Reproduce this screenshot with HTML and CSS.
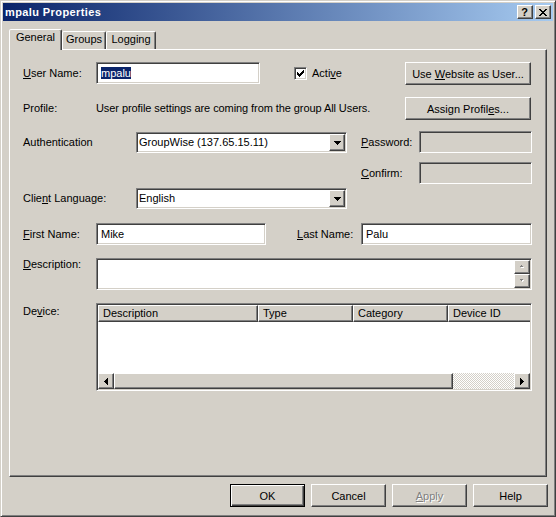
FILE: index.html
```html
<!DOCTYPE html>
<html>
<head>
<meta charset="utf-8">
<title>mpalu Properties</title>
<link rel="stylesheet" href="styles.css">
</head>
<body>
<div class="window">
  <div class="titlebar">
    <span class="title">mpalu Properties</span>
    <div class="tbtns">
      <div class="tbtn"><span class="qmark">?</span></div>
      <div class="tbtn">
        <svg class="xicon" width="8" height="7" viewBox="0 0 8 7" shape-rendering="crispEdges">
          <rect x="0" y="0" width="2" height="1"/><rect x="6" y="0" width="2" height="1"/>
          <rect x="1" y="1" width="2" height="1"/><rect x="5" y="1" width="2" height="1"/>
          <rect x="2" y="2" width="4" height="1"/>
          <rect x="3" y="3" width="2" height="1"/>
          <rect x="2" y="4" width="4" height="1"/>
          <rect x="1" y="5" width="2" height="1"/><rect x="5" y="5" width="2" height="1"/>
          <rect x="0" y="6" width="2" height="1"/><rect x="6" y="6" width="2" height="1"/>
        </svg>
      </div>
    </div>
  </div>

  <div class="tabs">
    <div class="tab sel tab-general">General</div>
    <div class="tab tab-groups">Groups</div>
    <div class="tab tab-logging">Logging</div>
  </div>

  <div class="panel">
    <div class="row r1">
      <div class="lbl lbl-short h22"><u>U</u>ser Name:</div>
      <div class="edit w-user"><span class="selected">mpalu</span></div>
      <div class="active">
        <span class="chk">
          <svg width="7" height="7" viewBox="0 0 7 7" shape-rendering="crispEdges">
            <rect x="0" y="2" width="1" height="3"/>
            <rect x="1" y="3" width="1" height="3"/>
            <rect x="2" y="4" width="1" height="3"/>
            <rect x="3" y="3" width="1" height="3"/>
            <rect x="4" y="2" width="1" height="3"/>
            <rect x="5" y="1" width="1" height="3"/>
            <rect x="6" y="0" width="1" height="3"/>
          </svg>
        </span>
        <span class="chk-label">Acti<u>v</u>e</span>
      </div>
      <div class="btn w-big"><span>Use <u>W</u>ebsite as User...</span></div>
    </div>

    <div class="row r2">
      <div class="lbl lbl-short h23">Profile:</div>
      <div class="lbl profile-text h23">User profile settings are coming from the group All Users.</div>
      <div class="btn w-big"><span>Assign Profil<u>e</u>s...</span></div>
    </div>

    <div class="row r3">
      <div class="lbl lbl-long h22">Authentication</div>
      <div class="combo w-combo combo-shift">
        <span class="ctext">GroupWise (137.65.15.11)</span>
        <span class="dd"><svg width="7" height="4" viewBox="0 0 7 4" shape-rendering="crispEdges"><rect x="0" y="0" width="7" height="1"/><rect x="1" y="1" width="5" height="1"/><rect x="2" y="2" width="3" height="1"/><rect x="3" y="3" width="1" height="1"/></svg></span>
      </div>
      <div class="lbl lbl-pw h22"><u>P</u>assword:</div>
      <div class="edit disabled w-pw"></div>
    </div>

    <div class="row r4">
      <div class="lbl lbl-pw lbl-confirm h22"><u>C</u>onfirm:</div>
      <div class="edit disabled w-pw"></div>
    </div>

    <div class="row r5">
      <div class="lbl lbl-long h21">Clie<u>n</u>t Language:</div>
      <div class="combo w-combo">
        <span class="ctext">English</span>
        <span class="dd"><svg width="7" height="4" viewBox="0 0 7 4" shape-rendering="crispEdges"><rect x="0" y="0" width="7" height="1"/><rect x="1" y="1" width="5" height="1"/><rect x="2" y="2" width="3" height="1"/><rect x="3" y="3" width="1" height="1"/></svg></span>
      </div>
    </div>

    <div class="row r6">
      <div class="lbl lbl-short h22"><u>F</u>irst Name:</div>
      <div class="edit w-first"><span class="etext">Mike</span></div>
      <div class="lbl lbl-last h22"><u>L</u>ast Name:</div>
      <div class="edit w-last"><span class="etext">Palu</span></div>
    </div>

    <div class="row r7">
      <div class="lbl lbl-short lbl-top"><u>D</u>escription:</div>
      <div class="memo">
        <div class="memo-body"></div>
        <div class="vscroll">
          <div class="sbtn vbtn"><svg width="6" height="4" viewBox="0 0 6 4" shape-rendering="crispEdges"><g fill="#fff"><rect x="3" y="1" width="1" height="1"/><rect x="2" y="2" width="3" height="1"/></g><g fill="#808080"><rect x="2" y="0" width="1" height="1"/><rect x="1" y="1" width="3" height="1"/></g></svg></div>
          <div class="sbtn vbtn"><svg width="6" height="4" viewBox="0 0 6 4" shape-rendering="crispEdges"><g fill="#fff"><rect x="2" y="1" width="3" height="1"/><rect x="3" y="2" width="1" height="1"/></g><g fill="#808080"><rect x="1" y="0" width="3" height="1"/><rect x="2" y="1" width="1" height="1"/></g></svg></div>
        </div>
      </div>
    </div>

    <div class="row r8">
      <div class="lbl lbl-short lbl-top lbl-device">De<u>v</u>ice:</div>
      <div class="list">
        <div class="lhead">
          <div class="hcol c1">Description</div>
          <div class="hcol c2">Type</div>
          <div class="hcol c3">Category</div>
          <div class="hcol c4">Device ID</div>
        </div>
        <div class="lbody"></div>
        <div class="hscroll">
          <div class="sbtn hbtn"><svg width="4" height="7" viewBox="0 0 4 7" shape-rendering="crispEdges"><rect x="3" y="0" width="1" height="7"/><rect x="2" y="1" width="1" height="5"/><rect x="1" y="2" width="1" height="3"/><rect x="0" y="3" width="1" height="1"/></svg></div>
          <div class="thumb"></div>
          <div class="track"></div>
          <div class="sbtn hbtn"><svg width="4" height="7" viewBox="0 0 4 7" shape-rendering="crispEdges"><rect x="0" y="0" width="1" height="7"/><rect x="1" y="1" width="1" height="5"/><rect x="2" y="2" width="1" height="3"/><rect x="3" y="3" width="1" height="1"/></svg></div>
        </div>
      </div>
    </div>
  </div>

  <div class="actions">
    <div class="btn dlg default"><span>OK</span></div>
    <div class="btn dlg"><span>Cancel</span></div>
    <div class="btn dlg off"><span><u>A</u>pply</span></div>
    <div class="btn dlg"><span>Help</span></div>
  </div>
</div>
</body>
</html>
```

FILE: styles.css
```css
* { box-sizing: border-box; }
html, body { margin: 0; padding: 0; }
body {
  width: 556px;
  height: 517px;
  overflow: hidden;
  background: #D4D0C8;
  font-family: "Liberation Sans", Arial, sans-serif;
  font-size: 11px;
  color: #000;
}
u { text-decoration: underline; text-underline-offset: 1px; }

.window {
  width: 556px;
  height: 517px;
  border: 1px solid;
  border-color: #D4D0C8 #404040 #404040 #D4D0C8;
  box-shadow: inset 1px 1px #fff, inset -1px -1px #808080;
  padding: 2px;
  background: #D4D0C8;
  display: flex;
  flex-direction: column;
}

/* title bar */
.titlebar {
  height: 18px;
  flex-shrink: 0;
  background: linear-gradient(to right, #0A246A, #A6CAF0);
  display: flex;
  align-items: center;
  justify-content: space-between;
  padding: 0 2px 0 2px;
}
.title {
  color: #fff;
  font-weight: bold;
  font-size: 11px;
  letter-spacing: 0.4px;
  line-height: 14px;
}
.tbtns { display: flex; gap: 2px; }
.tbtn {
  width: 16px;
  height: 14px;
  background: #D4D0C8;
  border: 1px solid;
  border-color: #fff #404040 #404040 #fff;
  box-shadow: inset -1px -1px #808080;
  display: flex;
  align-items: center;
  justify-content: center;
}
.qmark { font-weight: bold; font-size: 11px; line-height: 10px; margin-left: -1px; }
.xicon { fill: #000; display: block; margin-left: -1px; }

/* tabs */
.tabs {
  display: flex;
  align-items: flex-end;
  height: 20px;
  margin: 8px 0 0 6px;
  position: relative;
  z-index: 1;
  flex-shrink: 0;
}
.tab {
  height: 18px;
  border: 1px solid;
  border-bottom: none;
  border-color: #fff #404040 transparent #fff;
  border-radius: 2px 2px 0 0;
  box-shadow: inset -1px 0 #808080;
  text-align: center;
  line-height: 13px;
  padding-top: 1px;
  background: #D4D0C8;
}
.tab.sel { height: 21px; margin-bottom: -1px; }
.tab-general { width: 53px; }
.tab-groups { width: 44px; }
.tab-logging { width: 50px; }

/* panel */
.panel {
  width: 538px;
  height: 428px;
  margin-left: 6px;
  flex-shrink: 0;
  border: 1px solid;
  border-color: #fff #404040 #404040 #fff;
  box-shadow: inset -1px -1px #808080;
  padding: 12px 0 0 13px;
}
.row { display: flex; align-items: flex-start; }
.r2 { margin-top: 12px; }
.r3 { margin-top: 11px; }
.r4 { margin-top: 9px; }
.r5 { margin-top: 4px; }
.r6 { margin-top: 14px; }
.r7 { margin-top: 13px; }
.r8 { margin-top: 13px; }

.lbl { white-space: nowrap; flex-shrink: 0; }
.h21 { line-height: 21px; }
.h22 { line-height: 22px; }
.h23 { line-height: 23px; }
.lbl-top { line-height: 13px; }
.lbl-device { padding-top: 2px; }
.lbl-short { width: 73px; }
.lbl-long { width: 113px; }
.lbl-pw { width: 58px; margin-left: 14px; }
.lbl-confirm { margin-left: 338px; }
.lbl-last { width: 64px; margin-left: 31px; }
.profile-text { width: 309px; letter-spacing: -0.08px; }

/* sunken fields */
.edit, .combo, .memo, .list {
  flex-shrink: 0;
  border: 1px solid;
  border-color: #808080 #fff #fff #808080;
  box-shadow: inset 1px 1px #404040, inset -1px -1px #D4D0C8;
  background: #fff;
}
.edit {
  height: 22px;
  display: flex;
  align-items: center;
  padding-left: 4px;
}
.edit.disabled { background: #D4D0C8; }
.w-user { width: 164px; }
.w-pw { width: 113px; }
.w-first { width: 170px; }
.w-last { width: 171px; }
.selected {
  background: #0A246A;
  color: #fff;
  line-height: 12px;
  display: inline-block;
}
.etext { line-height: 13px; }

/* checkbox */
.active {
  width: 111px;
  height: 22px;
  margin-left: 34px;
  display: flex;
  align-items: center;
}
.chk {
  width: 13px;
  height: 13px;
  border: 1px solid;
  border-color: #808080 #fff #fff #808080;
  box-shadow: inset 1px 1px #404040, inset -1px -1px #D4D0C8;
  background: #fff;
  display: flex;
  align-items: center;
  justify-content: center;
}
.chk svg { display: block; fill: #000; }
.chk-label { margin-left: 5px; }

/* buttons */
.btn {
  flex-shrink: 0;
  height: 23px;
  background: #D4D0C8;
  border: 1px solid;
  border-color: #fff #404040 #404040 #fff;
  box-shadow: inset -1px -1px #808080;
  display: flex;
  align-items: center;
  justify-content: center;
  white-space: nowrap;
}
.w-big { width: 126px; }
.actions {
  display: flex;
  justify-content: flex-end;
  gap: 6px;
  margin: 7px 5px 0 0;
}
.dlg { width: 75px; }
.default {
  border-color: #000;
  box-shadow: inset 1px 1px #fff, inset -1px -1px #404040, inset -2px -2px #808080;
}
.off { color: #808080; text-shadow: 1px 1px 0 #fff; }

/* combo */
.combo {
  height: 21px;
  display: flex;
  align-items: center;
  padding: 1px;
}
.combo-shift { margin-top: 1px; }
.w-combo { width: 211px; }
.ctext { flex: 1; padding-left: 1px; line-height: 13px; }
.dd, .sbtn, .thumb {
  background: #D4D0C8;
  border: 1px solid;
  border-color: #fff #404040 #404040 #fff;
  box-shadow: inset -1px -1px #808080;
  flex-shrink: 0;
}
.dd {
  width: 16px;
  height: 17px;
  display: flex;
  align-items: center;
  justify-content: center;
}
.dd svg, .sbtn svg { display: block; fill: #000; }

/* memo */
.memo {
  width: 436px;
  height: 32px;
  display: flex;
  padding: 1px;
}
.memo-body { flex: 1; }
.vscroll { width: 16px; display: flex; flex-direction: column; }
.vbtn {
  height: 14px;
  display: flex;
  align-items: center;
  justify-content: center;
}

/* list view */
.list {
  width: 436px;
  height: 88px;
  padding: 1px;
  display: flex;
  flex-direction: column;
}
.lhead { height: 17px; display: flex; overflow: hidden; flex-shrink: 0; }
.hcol {
  flex-shrink: 0;
  height: 17px;
  background: #D4D0C8;
  border: 1px solid;
  border-color: #fff #404040 #404040 #fff;
  box-shadow: inset -1px -1px #808080;
  padding-left: 4px;
  line-height: 15px;
  white-space: nowrap;
}
.c1 { width: 160px; }
.c2 { width: 95px; }
.c3 { width: 95px; }
.c4 { width: 110px; }
.lbody { flex: 1; }
.hscroll { height: 16px; display: flex; flex-shrink: 0; }
.hbtn {
  width: 16px;
  height: 16px;
  display: flex;
  align-items: center;
  justify-content: center;
}
.thumb { width: 339px; height: 16px; }
.track {
  flex: 1;
  height: 16px;
  background: repeating-conic-gradient(#fff 0 25%, #D4D0C8 0 50%) 0 0 / 2px 2px;
}
```
